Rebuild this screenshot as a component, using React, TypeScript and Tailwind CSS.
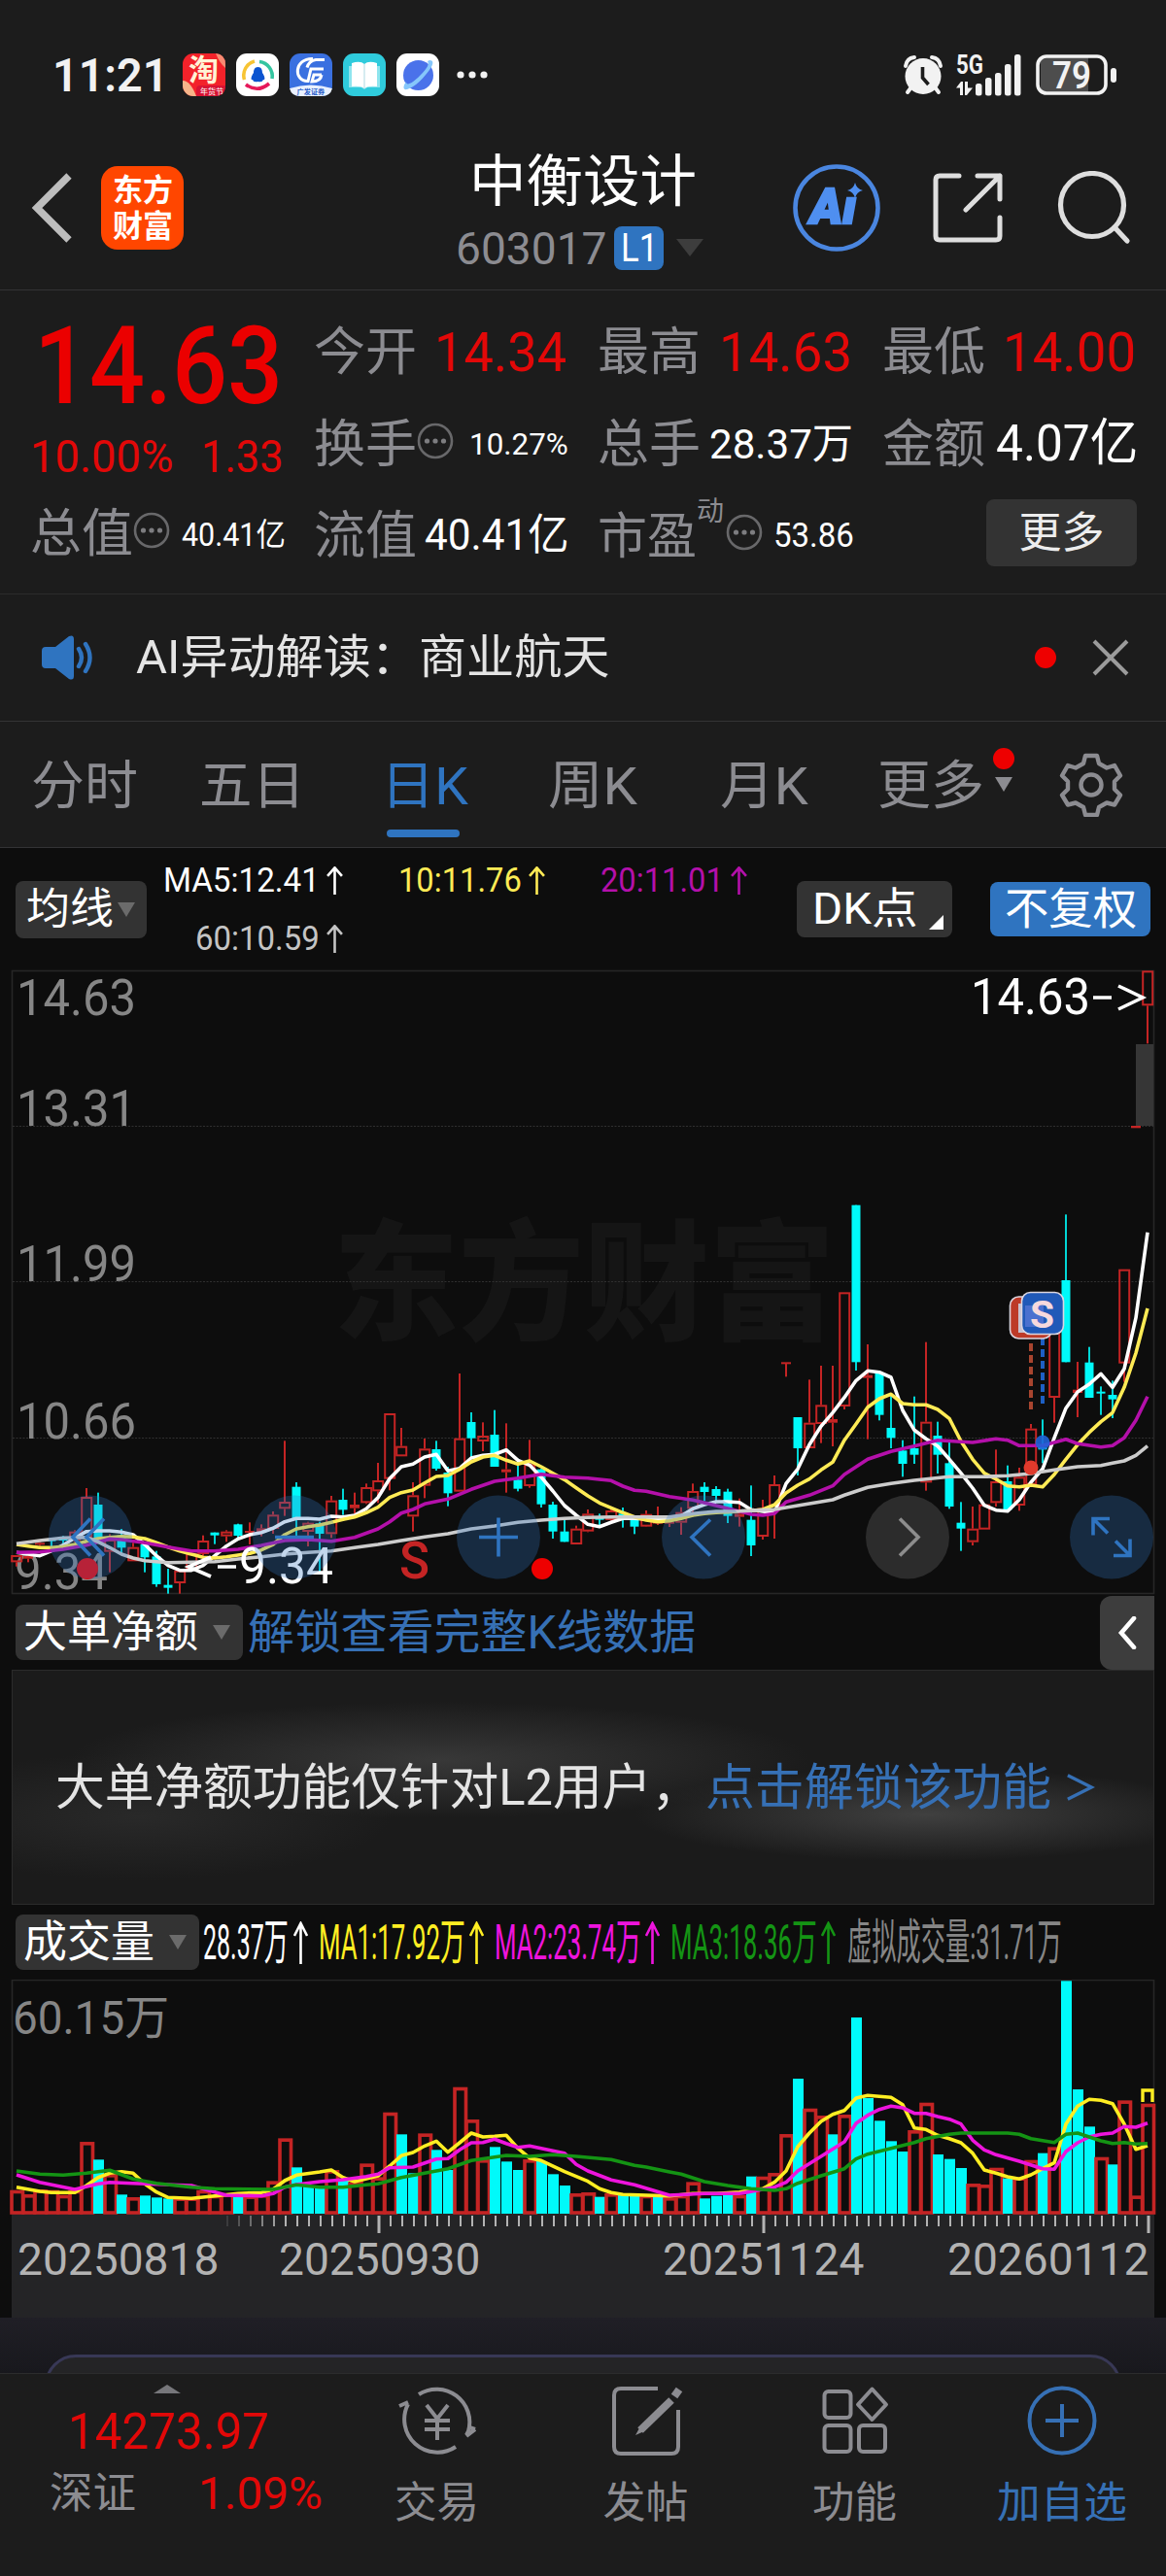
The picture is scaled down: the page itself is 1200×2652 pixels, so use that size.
import { useLayoutEffect, useRef, useState, type ReactNode } from "react";
import clsx from "clsx";

const FONT = "font-[Roboto,'Noto_Sans_CJK_SC',sans-serif]";

type Candle = ["r" | "c", number, number, number, number];
type Point = [number, number];

// [color, high, low, body top, body bottom], in thirds of a pixel below PRICE_BASE
const CANDLES: Candle[] = [
  ["r", 1203, 1238, 1203, 1225],
  ["r", 1203, 1225, 1206, 1214],
  ["r", 1162, 1175, 1165, 1171],
  ["c", 1150, 1176, 1154, 1160],
  ["c", 1144, 1172, 1152, 1157],
  ["r", 1126, 1165, 1130, 1160],
  ["r", 996, 1150, 1023, 1150],
  ["c", 1010, 1165, 1047, 1160],
  ["r", 1138, 1256, 1155, 1193],
  ["c", 1122, 1200, 1142, 1180],
  ["r", 1165, 1222, 1178, 1222],
  ["c", 1165, 1256, 1170, 1210],
  ["c", 1190, 1301, 1207, 1293],
  ["c", 1245, 1322, 1295, 1304],
  ["r", 1245, 1322, 1250, 1290],
  ["r", 1195, 1250, 1198, 1248],
  ["r", 1142, 1205, 1158, 1200],
  ["c", 1133, 1169, 1133, 1142],
  ["r", 1126, 1162, 1130, 1145],
  ["c", 1106, 1156, 1108, 1143],
  ["r", 1102, 1170, 1128, 1134],
  ["r", 1108, 1145, 1120, 1131],
  ["r", 1068, 1137, 1078, 1122],
  ["r", 850, 1082, 1038, 1060],
  ["c", 978, 1160, 992, 1090],
  ["r", 1100, 1176, 1103, 1131],
  ["c", 1100, 1260, 1105, 1137],
  ["r", 1020, 1150, 1034, 1138],
  ["c", 998, 1079, 1032, 1063],
  ["r", 1010, 1075, 1047, 1058],
  ["r", 982, 1045, 993, 1042],
  ["r", 918, 1042, 972, 1006],
  ["r", 765, 1003, 765, 968],
  ["r", 810, 898, 866, 898],
  ["r", 978, 1130, 1018, 1084],
  ["r", 843, 1027, 874, 989],
  ["c", 850, 942, 876, 936],
  ["c", 930, 1052, 948, 1012],
  ["r", 642, 1007, 842, 1007],
  ["c", 762, 900, 792, 842],
  ["r", 793, 882, 834, 852],
  ["c", 755, 930, 831, 930],
  ["r", 796, 1010, 938, 947],
  ["c", 905, 1006, 970, 998],
  ["r", 847, 995, 922, 990],
  ["c", 936, 1056, 938, 1046],
  ["c", 1038, 1152, 1047, 1130],
  ["c", 1095, 1162, 1130, 1162],
  ["r", 1112, 1170, 1121, 1170],
  ["r", 1062, 1132, 1075, 1130],
  ["c", 1075, 1110, 1088, 1093],
  ["r", 1060, 1097, 1065, 1095],
  ["c", 1056, 1118, 1075, 1083],
  ["c", 1088, 1138, 1090, 1115],
  ["r", 1065, 1116, 1076, 1115],
  ["r", 1053, 1110, 1098, 1106],
  ["r", 1085, 1116, 1100, 1106],
  ["r", 1055, 1140, 1070, 1103],
  ["r", 982, 1085, 1005, 1060],
  ["c", 978, 1036, 992, 1008],
  ["c", 990, 1040, 999, 1020],
  ["c", 998, 1104, 1007, 1082],
  ["r", 1028, 1115, 1075, 1085],
  ["c", 988, 1206, 1094, 1173],
  ["r", 1032, 1155, 1058, 1146],
  ["r", 957, 1152, 984, 1066],
  ["r", 607, 652, 607, 611],
  ["c", 777, 957, 777, 873],
  ["r", 661, 873, 794, 873],
  ["r", 618, 857, 739, 798],
  ["r", 618, 867, 783, 794],
  ["r", 391, 753, 391, 744],
  ["c", 122, 633, 122, 607],
  ["r", 552, 845, 647, 656],
  ["c", 640, 787, 640, 770],
  ["c", 710, 873, 810, 841],
  ["c", 848, 961, 880, 921],
  ["c", 713, 921, 873, 893],
  ["r", 545, 1004, 791, 979],
  ["c", 791, 951, 834, 893],
  ["c", 855, 1060, 919, 1053],
  ["c", 1039, 1190, 1103, 1121],
  ["r", 1053, 1173, 1121, 1163],
  ["r", 1046, 1124, 1046, 1124],
  ["r", 877, 1053, 975, 1042],
  ["c", 926, 1067, 975, 1063],
  ["r", 933, 1066, 961, 1050],
  ["r", 798, 986, 812, 986],
  ["c", 784, 919, 870, 877],
  ["r", 494, 794, 494, 717],
  ["c", 151, 607, 354, 607],
  ["r", 606, 777, 692, 702],
  ["c", 560, 717, 608, 717],
  ["c", 682, 770, 698, 703],
  ["c", 664, 780, 708, 722],
  ["r", 320, 668, 320, 611],
  ["r", -123, -116, -123, -116],
  ["r", -602, -377, -602, -494],
];

// One value per candle, same unit as CANDLES
const MA5 = [
  1195, 1200, 1205, 1190, 1172, 1150, 1130, 1128, 1128, 1132, 1140, 1170, 1205, 1235, 1250, 1250, 1235,
  1205, 1175, 1153, 1140, 1133, 1120, 1100, 1090, 1090, 1092, 1083, 1085, 1080, 1060, 1025, 967, 930, 922,
  900, 892, 943, 935, 903, 895, 892, 878, 910, 925, 962, 1005, 1050, 1080, 1108, 1115, 1102, 1090, 1090,
  1092, 1092, 1092, 1082, 1060, 1047, 1038, 1038, 1040, 1063, 1068, 1072, 982, 937, 862, 805, 763, 716,
  664, 634, 638, 654, 756, 817, 844, 866, 907, 950, 996, 1049, 1064, 1067, 1032, 978, 937, 841, 749, 699,
  675, 643, 685, 628, 470, 206,
];
const MA10 = [
  1170, 1175, 1180, 1180, 1177, 1170, 1160, 1152, 1148, 1145, 1147, 1152, 1165, 1178, 1190, 1200, 1210,
  1212, 1208, 1203, 1198, 1187, 1170, 1140, 1122, 1115, 1110, 1102, 1093, 1085, 1072, 1055, 1025, 1010,
  1002, 980, 960, 957, 938, 915, 900, 895, 910, 922, 912, 930, 950, 970, 995, 1020, 1042, 1057, 1072, 1085,
  1095, 1100, 1097, 1090, 1080, 1075, 1072, 1070, 1068, 1066, 1062, 1048, 1011, 987, 968, 940, 916, 848,
  798, 746, 720, 706, 735, 739, 739, 753, 781, 851, 907, 950, 968, 989, 992, 987, 992, 954, 907, 862, 824,
  791, 763, 685, 579, 441,
];
const MA20: Point[] = [
  [0, 1195], [2, 1193], [4, 1185], [6, 1172], [8, 1153], [9, 1155], [11, 1165], [13, 1178], [15, 1190],
  [17, 1190], [19, 1185], [21, 1173], [23, 1158], [25, 1155], [27, 1160], [29, 1148], [31, 1122],
  [32, 1100], [33, 1073], [34, 1062], [35, 1045], [37, 1030], [39, 1000], [41, 975], [43, 965], [45, 953],
  [47, 962], [49, 965], [51, 973], [52, 990], [53, 1003], [54, 1006], [56, 1022], [58, 1033], [60, 1050],
  [62, 1068], [63, 1077], [64, 1080], [65, 1075], [66, 1039], [68, 1018], [70, 989], [71, 954], [73, 907],
  [75, 883], [77, 866], [79, 848], [82, 855], [84, 844], [85, 848], [86, 865], [88, 865], [90, 845],
  [91, 859], [93, 869], [94, 865], [95, 841], [96, 787], [97, 713],
];
const MA60: Point[] = [
  [0, 1168], [2, 1158], [4, 1150], [6, 1148], [7, 1162], [8, 1180], [9, 1200], [10, 1212], [11, 1220],
  [13, 1226], [15, 1225], [17, 1223], [19, 1215], [21, 1208], [23, 1200], [25, 1195], [27, 1190],
  [29, 1180], [31, 1170], [33, 1158], [35, 1147], [37, 1137], [39, 1122], [41, 1113], [43, 1102],
  [45, 1095], [47, 1090], [49, 1087], [51, 1085], [56, 1085], [58, 1075], [60, 1068], [62, 1067],
  [65, 1062], [67, 1050], [70, 1032], [71, 1018], [73, 994], [75, 982], [77, 972], [80, 961], [83, 961],
  [85, 958], [87, 951], [89, 940], [91, 930], [93, 926], [94, 919], [95, 912], [96, 895], [97, 866],
];

// Positive values are down days, negative ones up days (outlined)
const VOLUMES = [
  -915, -928, -913, -915, -930, -915, -766, 820, -865, 928, -937, 931, 937, 940, -938, -938, -915, -930,
  -925, 935, -932, -928, -887, -755, 844, 900, 905, -853, 885, -890, -833, -875, -675, 742, 862, -740, 790,
  852, -597, -697, -820, 781, 826, 852, -820, 825, 865, 900, -925, -922, 935, -925, 930, 930, -930, 933,
  -937, -930, -890, 940, 932, 930, -930, 872, -873, -862, -742, 570, -663, -685, 742, -682, 381, 630, 700,
  763, 795, -730, -645, 804, 818, 846, -895, -898, -846, 878, -875, -822, 800, -782, 268, 603, 718, -813,
  835, -638, -932, -648,
];
const VOL_MA1: Point[] = [
  [0, 905], [2, 918], [3, 922], [5, 922], [6, 900], [7, 875], [8, 862], [9, 857], [10, 862], [11, 895],
  [12, 920], [13, 937], [15, 940], [17, 932], [19, 925], [21, 922], [22, 912], [23, 885], [24, 868],
  [26, 858], [27, 852], [28, 875], [29, 888], [31, 870], [32, 840], [33, 808], [34, 798], [35, 778],
  [36, 763], [37, 797], [38, 768], [39, 738], [40, 750], [41, 748], [42, 745], [43, 785], [44, 815],
  [45, 823], [47, 857], [49, 887], [50, 910], [51, 922], [52, 928], [56, 932], [58, 925], [60, 925],
  [62, 920], [64, 910], [65, 890], [66, 855], [67, 780], [68, 738], [69, 702], [70, 680], [71, 668],
  [72, 630], [73, 622], [75, 628], [76, 650], [77, 722], [78, 727], [79, 745], [80, 755], [81, 768],
  [82, 800], [83, 852], [84, 862], [85, 873], [86, 880], [87, 867], [88, 848], [89, 830], [90, 710],
  [91, 655], [92, 634], [93, 637], [94, 647], [95, 710], [96, 788], [97, 777],
];
const VOL_MA2: Point[] = [
  [0, 867], [2, 890], [5, 912], [7, 895], [8, 890], [10, 893], [15, 900], [17, 920], [18, 930], [21, 932],
  [22, 925], [23, 905], [24, 897], [26, 888], [28, 882], [30, 872], [31, 865], [32, 845], [34, 843],
  [36, 818], [37, 817], [38, 790], [39, 768], [40, 767], [41, 757], [42, 770], [43, 782], [44, 778],
  [45, 785], [47, 800], [48, 835], [49, 855], [51, 883], [53, 898], [56, 930], [59, 925], [62, 925],
  [64, 912], [65, 905], [66, 890], [67, 855], [69, 810], [71, 765], [72, 708], [73, 683], [74, 665],
  [75, 655], [76, 660], [77, 677], [78, 677], [79, 687], [80, 695], [81, 710], [82, 760], [83, 790],
  [84, 805], [86, 825], [88, 848], [89, 850], [90, 795], [91, 768], [92, 750], [93, 742], [94, 738],
  [95, 718], [96, 720], [97, 707],
];
const VOL_MA3: Point[] = [
  [0, 855], [2, 865], [4, 868], [6, 862], [8, 853], [10, 880], [12, 893], [15, 905], [17, 910], [22, 912],
  [24, 898], [26, 905], [28, 905], [30, 898], [31, 895], [33, 875], [35, 862], [37, 848], [39, 823],
  [41, 812], [42, 807], [44, 810], [46, 805], [48, 810], [51, 820], [53, 838], [54, 843], [56, 858],
  [57, 865], [59, 888], [61, 900], [63, 910], [65, 915], [66, 910], [67, 893], [69, 870], [71, 848],
  [72, 818], [73, 803], [75, 785], [77, 767], [78, 755], [80, 742], [81, 738], [85, 738], [86, 742],
  [87, 755], [89, 767], [90, 742], [91, 738], [93, 762], [94, 770], [95, 767], [96, 772], [97, 770],
];

const PRICE_BASE = 201;

const cx = (i: number) => 17 + i * 12;
const priceY = (v: number) => PRICE_BASE + v / 3;
const volumeY = (v: number) => (v - 267) / 3 + 1;

const linePoints = (points: Point[], y: (v: number) => number) =>
  points.map(([i, v]) => `${cx(i)},${y(v).toFixed(1)}`).join(" ");

const indexed = (values: number[]): Point[] => values.map((v, i) => [i, v]);

/** One line of text, stretched or squeezed to the width of its box. */
function Fit({ children, className }: { children: ReactNode; className?: string }) {
  const box = useRef<HTMLSpanElement>(null);
  const text = useRef<HTMLSpanElement>(null);
  const [scale, setScale] = useState(1);

  useLayoutEffect(() => {
    if (box.current && text.current) {
      setScale(box.current.clientWidth / text.current.offsetWidth);
    }
  }, [children]);

  return (
    <span ref={box} className={clsx("block shrink-0 leading-none", className)}>
      <span
        ref={text}
        className="inline-block origin-left whitespace-nowrap"
        style={{ transform: `scaleX(${scale})` }}
      >
        {children}
      </span>
    </span>
  );
}

function Up({ className }: { className?: string }) {
  return (
    <svg
      viewBox="0 0 16 44"
      preserveAspectRatio="none"
      fill="none"
      stroke="currentColor"
      strokeWidth="2.6"
      className={clsx("shrink-0", className)}
    >
      <path d="M8 44V3M1 15 8 2l7 13" vectorEffect="non-scaling-stroke" />
    </svg>
  );
}

function Caret({ className }: { className?: string }) {
  return (
    <svg viewBox="0 0 18 15" className={clsx("h-[15px] w-[18px] shrink-0", className)}>
      <path d="M0 0h18L9 15z" />
    </svg>
  );
}

function More() {
  return (
    <svg viewBox="0 0 38 38" className="mb-[8px] size-[38px] shrink-0">
      <circle cx="19" cy="19" r="17" fill="none" stroke="#68686a" strokeWidth="2.6" />
      <g fill="#7d7d80">
        <circle cx="10.5" cy="19" r="2.6" />
        <circle cx="19" cy="19" r="2.6" />
        <circle cx="27.5" cy="19" r="2.6" />
      </g>
    </svg>
  );
}

function StatusBar() {
  return (
    <div className="flex h-[154px] items-center pl-[54px] text-[#f2f2f2]">
      <Fit className="w-[119px] text-[49px] font-semibold">11:21</Fit>
      <div className="ml-[15px] flex gap-[11px]">
        <svg viewBox="0 0 44 44" className="size-[44px] overflow-visible">
          <rect width="44" height="44" rx="11" fill="#f3222a" />
          <path d="M0 28q8 0 14 16H11A11 11 0 0 1 0 33z" fill="#f7b58a" />
          <path d="M34 0q10 1 10 11v4q-6-5-10-15z" fill="#f98a72" />
          <text x="6" y="28" fontSize="31" fontWeight="700" fill="#fff3d6" className={FONT}>淘</text>
          <path d="M18 33h26q0 11-11 11H14v-7q0-4 4-4z" fill="#d81433" />
          <text x="18" y="42" fontSize="8" fill="#fff" className={FONT}>年货节</text>
        </svg>
        <svg viewBox="0 0 44 44" className="size-[44px]" fill="none" strokeWidth="3.6">
          <rect width="44" height="44" rx="11" fill="#fff" />
          <path d="M8.500 27A15 15 0 0 1 19 8" stroke="#f7c433" />
          <path d="M24 8.500A15 15 0 0 1 37 26" stroke="#34c5a0" />
          <path d="M10 32q12 9 24-1" stroke="#e6195a" />
          <path d="M22.500 14c3.500 0 4.500 3 4.500 6 3 4 3 8 1 7q-1 3-5.500 2-5 1-5.500-2c-2 1-2-3 1-7 0-3 1-6 4.500-6z" fill="#0b54d0" />
        </svg>
        <svg viewBox="0 0 44 44" className="size-[44px] overflow-visible">
          <rect width="44" height="44" rx="11" fill="#3a70e0" />
          <path d="M0 36q22-7 44 0-2 8-11 8H11Q2 44 0 36z" fill="#eaf1ff" />
          <g fill="none" stroke="#fff" strokeWidth="3">
            <path d="M24 5.500C4 5 4 29 19 28.500L22 16h13M36 6.500H27q-7 1-9 8M33 22h-8l-2 7q9 0 10-7" />
          </g>
          <text x="7.500" y="42" fontSize="7.200" fontWeight="700" fill="#2a5fc9" className={FONT}>广发证券</text>
        </svg>
        <svg viewBox="0 0 44 44" className="size-[44px]">
          <rect width="44" height="44" rx="11" fill="#2fcbdc" />
          <path d="M6 13h32v22H25l-3 2-3-2H6z" fill="#8fe5ee" />
          <path d="M9 10q9-3 13 1 4-4 13-1v24q-9-1-13 2-4-3-13-2z" fill="#fff" />
          <path d="M22 11v25" stroke="#c9e6ec" strokeWidth="1.500" />
        </svg>
        <svg viewBox="0 0 44 44" className="size-[44px]">
          <rect width="44" height="44" rx="11" fill="#fff" />
          <circle cx="22.500" cy="22.500" r="15.500" fill="#4a72ea" />
          <path d="M34 7c4 0 5 3 0 10S19 35 11 37c-5 1-4-4-1-8 0 5 6 2 14-6S34 11 32 8z" fill="#86c7fb" />
        </svg>
      </div>
      <svg viewBox="0 0 32 8" className="ml-[18px] h-[8px] w-[32px] fill-[#f2f2f2]">
        <circle cx="4" cy="4" r="3.600" />
        <circle cx="16" cy="4" r="3.600" />
        <circle cx="28" cy="4" r="3.600" />
      </svg>

      <svg viewBox="0 0 42 42" className="ml-auto size-[42px]">
        <g fill="none" stroke="#f2f2f2" strokeWidth="4" strokeLinecap="round">
          <path d="M3 12q1-8 9-9M39 12q-1-8-9-9M8 35l-3 4M34 35l3 4" />
        </g>
        <circle cx="21" cy="22.500" r="18.500" fill="#f2f2f2" />
        <path d="M20.500 13v11l6 7" fill="none" stroke="#1c1c1c" strokeWidth="3.600" />
      </svg>
      <svg viewBox="0 0 68 44" className="ml-[13px] h-[44px] w-[68px] overflow-visible fill-[#f2f2f2]">
        <text x="0" y="21" fontSize="27" fontWeight="700" textLength="28" lengthAdjust="spacingAndGlyphs" className={FONT}>5G</text>
        <path d="M0 35.500 5 29h2v14H4v-7.500zM17 35.500 11 43H9V29h3v6.500z" />
        <rect x="20" y="31" width="6.500" height="12.500" rx="2.500" />
        <rect x="30" y="25" width="6.500" height="18.500" rx="2.500" />
        <rect x="40" y="20" width="6.500" height="23.500" rx="2.500" />
        <rect x="50" y="11" width="6.500" height="32.500" rx="2.500" />
        <rect x="60" y="1" width="6.500" height="42.500" rx="2.500" />
      </svg>
      <svg viewBox="0 0 84 42" className="mr-[50px] ml-[14px] h-[42px] w-[84px] overflow-visible fill-[#f2f2f2]">
        <rect x="5" y="3" width="49" height="36" fill="#4d4d4d" />
        <rect x="2" y="2" width="70" height="38" rx="9" fill="none" stroke="#f2f2f2" strokeWidth="3.600" />
        <rect x="77" y="14" width="6" height="15" rx="3" />
        <text x="17" y="35" fontSize="38" fontWeight="600" textLength="40" lengthAdjust="spacingAndGlyphs" className={FONT}>79</text>
      </svg>
    </div>
  );
}

function Header() {
  return (
    <div className="flex h-[145px] items-center border-b border-[#333335]">
      <svg viewBox="0 0 44 72" className="mt-[-24px] ml-[32px] h-[72px] w-[44px] shrink-0" fill="none" stroke="#bdbdbd" strokeWidth="7.500">
        <path d="M39 3 6 36l33 33" />
      </svg>
      <div className="mt-[-24px] ml-[28px] flex h-[86px] w-[85px] shrink-0 flex-col items-center justify-center gap-[5px] rounded-[17px] bg-[#ff4600] text-[32px] font-bold text-white">
        <Fit className="h-[32px] w-[62px]">东方</Fit>
        <Fit className="h-[32px] w-[62px]">财富</Fit>
      </div>
      <div className="ml-[280px] flex w-[257px] shrink-0 flex-col">
        <Fit className="ml-[14px] w-[234px] text-[58px] text-white">中衡设计</Fit>
        <div className="mt-[16px] mb-[16px] flex items-center">
          <Fit className="w-[156px] text-[47px] text-[#8c8c91]">603017</Fit>
          <div className="ml-[7px] flex h-[45px] w-[51px] items-center justify-center rounded-[8px] bg-[#2f74c0] text-white">
            <Fit className="w-[38px] text-[41px]">L1</Fit>
          </div>
          <svg viewBox="0 0 28 18" className="ml-[13px] h-[18px] w-[28px] fill-[#3d3d3d]">
            <path d="M0 0h28L14 18z" />
          </svg>
        </div>
      </div>
      <svg viewBox="0 0 90 90" className="mt-[-24px] ml-[90px] size-[90px] shrink-0">
        <circle cx="45" cy="45" r="42.500" fill="none" stroke="#4a86e0" strokeWidth="4.600" />
        <g fill="#4f8ff0" stroke="#4f8ff0">
          <text x="18" y="61" fontSize="50" fontWeight="900" fontStyle="italic" textLength="47" lengthAdjust="spacingAndGlyphs" strokeWidth="2.500" className={FONT}>Aı</text>
          <path stroke="none" d="M64 19q1.500 6.500 8 8-6.500 1.500-8 8-1.500-6.500-8-8 6.500-1.500 8-8z" />
        </g>
      </svg>
      <svg viewBox="0 0 72 72" className="mt-[-24px] ml-[54px] size-[72px] shrink-0" fill="none" stroke="#dedede" strokeWidth="5" strokeLinecap="round" strokeLinejoin="round">
        <path d="M27 3H7q-4 0-4 4v58q0 4 4 4h58q4 0 4-4V46M46 3h23v24M69 3 34 38" />
      </svg>
      <svg viewBox="0 0 76 76" className="mt-[-24px] ml-[56px] size-[76px] shrink-0" fill="none" stroke="#dedede" strokeWidth="5.200" strokeLinecap="round">
        <circle cx="36" cy="35" r="32.500" />
        <path d="m59 58 13 14" />
      </svg>
    </div>
  );
}

function Label({ children }: { children: ReactNode }) {
  return <Fit className="w-[106px] text-[53px] text-[#8c8c91]">{children}</Fit>;
}

function QuotePanel() {
  return (
    <div className="flex h-[313px] border-b border-[#2b2b2c] pt-[17px] text-white">
      <div className="flex w-[323px] shrink-0 flex-col pl-[31px]">
        <Fit className="mt-[6px] ml-[4px] w-[256px] text-[111px] font-medium text-[#eb0000]">14.63</Fit>
        <div className="mt-[3px] flex h-[66px] items-center text-[47px] text-[#e20808]">
          <Fit className="w-[147px]">10.00%</Fit>
          <Fit className="ml-[29px] w-[85px]">1.33</Fit>
        </div>
        <div className="flex h-[96px] items-center">
          <Label>总值</Label>
          <More />
          <Fit className="ml-[12px] w-[107px] text-[33px]">40.41亿</Fit>
        </div>
      </div>
      <div className="flex w-[292px] shrink-0 flex-col">
        <div className="flex h-[95px] items-center">
          <Label>今开</Label>
          <Fit className="ml-[18px] w-[136px] text-[55px] text-[#e20808]">14.34</Fit>
        </div>
        <div className="flex h-[94px] items-center">
          <Label>换手</Label>
          <More />
          <Fit className="mb-[2px] ml-[16px] w-[102px] text-[32px]">10.27%</Fit>
        </div>
        <div className="flex h-[94px] items-center">
          <Label>流值</Label>
          <Fit className="mb-[2px] ml-[8px] w-[149px] text-[44px]">40.41亿</Fit>
        </div>
      </div>
      <div className="flex w-[293px] shrink-0 flex-col">
        <div className="flex h-[95px] items-center">
          <Label>最高</Label>
          <Fit className="ml-[19px] w-[137px] text-[55px] text-[#e20808]">14.63</Fit>
        </div>
        <div className="flex h-[94px] items-center">
          <Label>总手</Label>
          <Fit className="mb-[2px] ml-[9px] w-[148px] text-[43px]">28.37万</Fit>
        </div>
        <div className="flex h-[94px] items-center">
          <Fit className="w-[102px] text-[51px] text-[#8c8c91]">市盈</Fit>
          <Fit className="mr-[2px] mb-[50px] w-[28px] text-[28px] text-[#8c8c91]">动</Fit>
          <More />
          <Fit className="mb-[2px] ml-[11px] w-[83px] text-[35px]">53.86</Fit>
        </div>
      </div>
      <div className="flex flex-1 flex-col">
        <div className="flex h-[95px] items-center">
          <Label>最低</Label>
          <Fit className="ml-[18px] w-[137px] text-[55px] text-[#e20808]">14.00</Fit>
        </div>
        <div className="flex h-[94px] items-center">
          <Label>金额</Label>
          <Fit className="mb-[2px] ml-[11px] w-[146px] text-[52px]">4.07亿</Fit>
        </div>
        <div className="flex h-[94px] items-center">
          <div className="mb-[7px] ml-[107px] flex h-[69px] w-[155px] items-center justify-center rounded-[8px] bg-[#333333]">
            <Fit className="w-[88px] text-[44px] text-[#ededed]">更多</Fit>
          </div>
        </div>
      </div>
    </div>
  );
}

function Notice() {
  return (
    <div className="flex h-[131px] items-center border-b border-[#333335]">
      <svg viewBox="0 0 56 46" className="ml-[43px] h-[46px] w-[56px]">
        <path d="M4 12h10L28 1q5-2 5 3v38q0 5-5 3L14 34H4q-4 0-4-4V16q0-4 4-4z" fill="#2f74c0" />
        <path d="M38 14q6 9 0 18M45 9q9 14 0 28" fill="none" stroke="#2f74c0" strokeWidth="4.400" strokeLinecap="round" />
      </svg>
      <Fit className="ml-[41px] w-[487px] text-[48px] text-[#e4e4e4]">AI异动解读：商业航天</Fit>
      <i className="ml-auto size-[22px] rounded-full bg-[#ee0000]" />
      <svg viewBox="0 0 40 40" className="mr-[37px] ml-[36px] size-[40px]" stroke="#9b9b9b" strokeWidth="4">
        <path d="m3 3 34 34M37 3 3 37" />
      </svg>
    </div>
  );
}

function Tabs() {
  return (
    <div className="flex h-[130px] items-center border-b border-[#333335] pt-[5px] text-[54px] text-[#8c8c91]">
      <Fit className="ml-[32px] w-[110px]">分时</Fit>
      <Fit className="ml-[63px] w-[109px]">五日</Fit>
      <div className="relative ml-[78px] text-[#2f74c0]">
        <Fit className="w-[90px]">日K</Fit>
        <i className="absolute top-[71px] left-[6px] h-[8px] w-[75px] rounded-full bg-[#2f74c0]" />
      </div>
      <Fit className="ml-[82px] w-[92px]">周K</Fit>
      <Fit className="ml-[85px] w-[91px]">月K</Fit>
      <Fit className="ml-[71px] w-[110px]">更多</Fit>
      <div className="mb-[35px] ml-[9px] flex flex-col items-center gap-[8px]">
        <i className="size-[22px] rounded-full bg-[#ee0000]" />
        <Caret className="fill-[#8c8c91]" />
      </div>
      <svg viewBox="0 0 66 66" className="mb-[5px] ml-[46px] size-[66px]" fill="none" stroke="#8c8c91" strokeWidth="4.400" strokeLinejoin="round">
        <path d="M27 3h12l2 8 8 4.500 8-2.500 6 10.500-6 6v8l6 6-6 10-8-2-8 4.500-2 8H27l-2-8-8-4.500-8 2-6-10 6-6v-8l-6-6L9 13l8 2.500 8-4.500z" />
        <circle cx="33" cy="33" r="10.500" />
      </svg>
    </div>
  );
}

function MaRow() {
  return (
    <div className="flex h-[126px] items-center text-[35px]">
      <div className="ml-[16px] flex h-[59px] w-[135px] items-center rounded-[8px] bg-[#333333] pl-[11px] text-white">
        <Fit className="w-[90px] text-[44px]">均线</Fit>
        <Caret className="ml-[4px] fill-[#6b6b6b]" />
      </div>
      <div className="ml-[17px] flex w-[652px] flex-col gap-[25px]">
        <div className="flex items-center">
          <Fit className="w-[161px] text-white">MA5:12.41</Fit>
          <Up className="ml-[7px] h-[29px] w-[17px] text-white" />
          <Fit className="ml-[57px] w-[127px] text-[#ffeb55]">10:11.76</Fit>
          <Up className="ml-[7px] h-[29px] w-[17px] text-[#ffeb55]" />
          <Fit className="ml-[57px] w-[127px] text-[#b410aa]">20:11.01</Fit>
          <Up className="ml-[7px] h-[29px] w-[17px] text-[#b410aa]" />
        </div>
        <div className="flex items-center text-[#c4c4c4]">
          <Fit className="ml-[33px] w-[128px]">60:10.59</Fit>
          <Up className="ml-[7px] h-[29px] w-[17px]" />
        </div>
      </div>
      <div className="flex h-[58px] w-[160px] items-center rounded-[8px] bg-[#333333] pl-[16px] text-white">
        <Fit className="w-[108px] text-[44px]">DK点</Fit>
        <svg viewBox="0 0 15 15" className="mt-[26px] ml-[12px] size-[15px] fill-white">
          <path d="M15 0v15H0z" />
        </svg>
      </div>
      <div className="ml-[39px] flex h-[56px] w-[165px] items-center justify-center rounded-[8px] bg-[#2f74c0] text-white">
        <Fit className="w-[136px] text-[45px]">不复权</Fit>
      </div>
    </div>
  );
}

function CandleShape({ candle, x }: { candle: Candle; x: number }) {
  const [color, high, low, top, bottom] = candle;
  const yTop = priceY(top);
  const yBottom = priceY(bottom);
  if (color === "c") {
    return (
      <g fill="#00fafa">
        <rect x={x - 1} y={priceY(high)} width="2" height={(low - high) / 3} opacity="0.85" />
        <rect x={x - 4.5} y={yTop} width="9" height={Math.max(2, yBottom - yTop)} />
      </g>
    );
  }
  const hollow = yBottom - yTop > 4.2;
  return (
    <g fill="#c42424">
      <rect x={x - 1} y={priceY(high)} width="2" height={Math.max(0, yTop - priceY(high))} />
      <rect x={x - 1} y={yBottom} width="2" height={Math.max(0, priceY(low) - yBottom)} />
      {hollow ? (
        <rect x={x - 4.8} y={yTop + 1} width="10" height={yBottom - yTop - 2} fill="none" stroke="#c42424" strokeWidth="2" />
      ) : (
        <rect x={x - 5} y={yTop} width="10" height={Math.max(2, yBottom - yTop)} />
      )}
    </g>
  );
}

function RoundButton({ x, muted, children }: { x: number; muted?: boolean; children: ReactNode }) {
  return (
    <g>
      <circle cx={x} cy="583.500" r="43" fill={muted ? "#2c2c2c" : "#2f74c0"} fillOpacity={muted ? 1 : 0.29} />
      <g transform={`translate(${x} 583.5)`} fill="none" stroke={muted ? "#8d8d8d" : "#2f74c0"} strokeWidth="3.600">
        {children}
      </g>
    </g>
  );
}

function AxisText({ x, y, width, children, fill = "#868686" }: { x: number; y: number; width: number; children: string; fill?: string }) {
  return (
    <text x={x} y={y} fontSize="51" fill={fill} textLength={width} lengthAdjust="spacingAndGlyphs">
      {children}
    </text>
  );
}

function PriceChart() {
  return (
    <svg viewBox="0 0 1200 643" className={clsx("block h-[643px] w-full overflow-visible", FONT)}>
      <text x="343" y="370" fontSize="134" fontWeight="900" fill="#151515" textLength="516" lengthAdjust="spacingAndGlyphs">
        东方财富
      </text>
      <rect x="12.500" y="0.500" width="1175" height="641" fill="none" stroke="#262626" strokeWidth="1.600" />
      {[160.5, 320.5, 481.5].map((y) => (
        <path key={y} d={`M13 ${y}H1187`} stroke="#303030" strokeDasharray="2 1.500" />
      ))}
      <AxisText x={17} y={46} width={123}>14.63</AxisText>
      <AxisText x={17} y={160} width={123}>13.31</AxisText>
      <AxisText x={17} y={320} width={123}>11.99</AxisText>
      <AxisText x={17} y={482} width={123}>10.66</AxisText>
      <AxisText x={15} y={637} width={96}>9.34</AxisText>

      <rect x="1169" y="76" width="18" height="84" fill="#363636" />
      {CANDLES.map((candle, i) => (
        <CandleShape key={i} candle={candle} x={cx(i)} />
      ))}

      <g fill="none" strokeWidth="3.600" strokeLinejoin="round">
        <polyline points={linePoints(indexed(MA5), priceY)} stroke="#ffffff" />
        <polyline points={linePoints(indexed(MA10), priceY)} stroke="#ffeb55" />
        <polyline points={linePoints(MA20, priceY)} stroke="#b410aa" />
        <polyline points={linePoints(MA60, priceY)} stroke="#cccccc" />
      </g>

      <g fill="none" stroke="#ffffff" strokeWidth="3.600">
        <path d="M217 604 194 614l23 10M224 614h19" />
        <path d="M1125 28h19M1151 16l25 12-25 12" />
      </g>
      <AxisText x={246} y={631} width={97} fill="#ffffff">9.34</AxisText>
      <AxisText x={999} y={45} width={123} fill="#ffffff">14.63</AxisText>
      <text x="411" y="626" fontSize="53" fontWeight="500" fill="#c42424" textLength="31" lengthAdjust="spacingAndGlyphs">S</text>

      {/* buy / sell markers */}
      <path d="M1061 384v69" stroke="#a8452f" strokeWidth="4" strokeDasharray="8 4" />
      <path d="M1073 378v70" stroke="#1d5fc4" strokeWidth="4" strokeDasharray="8 4" />
      <circle cx="1061" cy="512" r="7.500" fill="#e03a2c" />
      <circle cx="1073" cy="486" r="7.500" fill="#1f63d8" fillOpacity="0.900" />
      <rect x="1039.500" y="336" width="43" height="43" rx="9" fill="#bd3a28" stroke="#dcd6e0" strokeWidth="1.600" />
      <rect x="1048" y="343" width="20" height="30" fill="#c9c2cf" />
      <rect x="1051.500" y="331.500" width="43" height="43" rx="9" fill="#2059b8" stroke="#dcd6e0" strokeWidth="1.600" />
      <rect x="1055" y="345" width="19" height="22" fill="#4a70cf" />
      <text x="1060" y="368" fontSize="39" fontWeight="700" fill="#f6d9dd" textLength="25" lengthAdjust="spacingAndGlyphs">S</text>

      <circle cx="90" cy="616" r="11" fill="#ee0000" />
      <circle cx="558" cy="616" r="11" fill="#ee0000" />
      <RoundButton x={93}>
        <path d="M0-19-18 0 0 19M14-19-4 0l18 19" />
      </RoundButton>
      <RoundButton x={303}>
        <path d="M-20 0h40" />
      </RoundButton>
      <RoundButton x={513}>
        <path d="M-20 0h40M0-20v40" />
      </RoundButton>
      <RoundButton x={724}>
        <path d="M7-18-12 0 7 19" />
      </RoundButton>
      <RoundButton x={934} muted>
        <path d="M-8-19 11 0-8 19" />
      </RoundButton>
      <RoundButton x={1144}>
        <path d="M-2-19h-17v17M-19-19-4-4M19 2v17H2M4 4l15 15" />
      </RoundButton>
    </svg>
  );
}

function FlowRow() {
  return (
    <div className="flex h-[77px] items-center">
      <div className="ml-[16px] flex h-[57px] w-[234px] items-center rounded-[8px] bg-[#333333] pl-[8px]">
        <Fit className="w-[180px] text-[45px] text-white">大单净额</Fit>
        <Caret className="ml-[15px] fill-[#6b6b6b]" />
      </div>
      <Fit className="ml-[5px] w-[461px] text-[48px] text-[#3670b5]">解锁查看完整K线数据</Fit>
      <div className="mr-[12px] ml-auto flex h-[76px] w-[56px] items-center justify-center rounded-l-[12px] bg-[#3d3d3d]">
        <svg viewBox="0 0 20 34" className="h-[34px] w-[20px]" fill="none" stroke="#ffffff" strokeWidth="4.600" strokeLinecap="round">
          <path d="M17 2 4 17l13 15" />
        </svg>
      </div>
    </div>
  );
}

function UnlockPanel() {
  return (
    <div className="mx-[12px] flex h-[242px] items-center border border-[#2b2b2b] bg-[#1b1b1b] bg-[radial-gradient(ellipse_380px_60px_at_440px_92px,#383838,transparent),radial-gradient(ellipse_300px_48px_at_940px_148px,#404040,transparent),radial-gradient(ellipse_260px_65px_at_130px_150px,#292929,transparent)] pl-[44px] text-[51px]">
      <Fit className="w-[664px] text-[#e4e4e4]">大单净额功能仅针对L2用户，</Fit>
      <Fit className="ml-[5px] w-[356px] text-[#3670b5]">点击解锁该功能</Fit>
      <svg viewBox="0 0 30 32" className="ml-[15px] h-[30px] w-[30px]" fill="none" stroke="#3670b5" strokeWidth="3.600">
        <path d="M1 3l26 13L1 29" />
      </svg>
    </div>
  );
}

function VolumeRow() {
  return (
    <div className="flex h-[77px] items-center text-[50px]">
      <div className="ml-[16px] flex h-[57px] w-[189px] items-center rounded-[8px] bg-[#333333] pl-[8px]">
        <Fit className="w-[135px] text-[45px] text-white">成交量</Fit>
        <Caret className="ml-[15px] fill-[#6b6b6b]" />
      </div>
      <div className="ml-[4px] flex items-center text-white">
        <Fit className="w-[88px]">28.37万</Fit>
        <Up className="ml-[5px] h-[44px] w-[15px]" />
      </div>
      <div className="ml-[11px] flex items-center text-[#ffee22]">
        <Fit className="w-[151px]">MA1:17.92万</Fit>
        <Up className="ml-[4px] h-[44px] w-[15px]" />
      </div>
      <div className="ml-[11px] flex items-center text-[#ee14dd]">
        <Fit className="w-[151px]">MA2:23.74万</Fit>
        <Up className="ml-[4px] h-[44px] w-[15px]" />
      </div>
      <div className="ml-[11px] flex items-center text-[#149414]">
        <Fit className="w-[151px]">MA3:18.36万</Fit>
        <Up className="ml-[4px] h-[44px] w-[15px]" />
      </div>
      <Fit className="ml-[12px] w-[221px] text-[#868686]">虚拟成交量:31.71万</Fit>
    </div>
  );
}

function VolumeChart() {
  return (
    <svg viewBox="0 0 1200 242" className={clsx("block h-[242px] w-full", FONT)}>
      <rect x="12.500" y="0.500" width="1175" height="241" fill="none" stroke="#262626" strokeWidth="1.600" />
      <text x="13" y="56" fontSize="48" fill="#868686" textLength="161" lengthAdjust="spacingAndGlyphs">60.15万</text>
      {VOLUMES.map((v, i) => {
        const y = volumeY(Math.abs(v));
        return v > 0 ? (
          <rect key={i} x={cx(i) - 5} y={y} width="11" height={241 - y} fill="#00fafa" />
        ) : (
          <rect key={i} x={cx(i) - 5} y={y + 1.5} width="11.500" height={238.5 - y} fill="none" stroke="#c42424" strokeWidth="3.600" />
        );
      })}
      <path d="M1176 126V114h10v12" fill="none" stroke="#ffee22" strokeWidth="3.400" />
      <g fill="none" strokeWidth="3.600" strokeLinejoin="round">
        <polyline points={linePoints(VOL_MA1, volumeY)} stroke="#ffee22" />
        <polyline points={linePoints(VOL_MA2, volumeY)} stroke="#ee14dd" />
        <polyline points={linePoints(VOL_MA3, volumeY)} stroke="#149414" />
      </g>
    </svg>
  );
}

function DateAxis() {
  return (
    <div className="mx-[12px] h-[106px] bg-[#242426]">
      <svg viewBox="12 0 1176 22" className="block h-[22px] w-full">
        {Array.from({ length: 80 }, (_, k) => {
          const i = k + 18;
          const major = i === 31 || i === 64 || i === 97;
          return (
            <rect
              key={i}
              x={cx(i) - (major ? 0.5 : 0)}
              y="1"
              width={major ? 3 : 2}
              height={major ? 18 : 11}
              fill="#b3b3b3"
              opacity={Math.min(1, (k + 1) / 6)}
            />
          );
        })}
      </svg>
      <div className="flex text-[47px] text-[#b3b3b3]">
        <Fit className="ml-[6px] w-[207px]">20250818</Fit>
        <Fit className="ml-[62px] w-[207px]">20250930</Fit>
        <Fit className="ml-[188px] w-[207px]">20251124</Fit>
        <Fit className="ml-[86px] w-[207px]">20260112</Fit>
      </div>
    </div>
  );
}

function CardPeek() {
  return (
    <div className="h-[57px] overflow-hidden bg-linear-to-b from-[#201f26] to-[#18181d] px-[46px] pt-[38px]">
      <div className="h-[80px] rounded-[32px] border-[3px] border-[#383856] bg-[#242426]" />
    </div>
  );
}

function NavItem({ label, className, icon }: { label: string; className: string; icon: ReactNode }) {
  return (
    <div className="flex w-[215px] shrink-0 flex-col items-center pt-[9px]">
      <svg viewBox="0 0 80 80" className="size-[80px]" fill="none" stroke="currentColor" strokeWidth="4">
        {icon}
      </svg>
      <Fit className={clsx("mt-[22px] text-[44px]", className)}>{label}</Fit>
    </div>
  );
}

function BottomNav() {
  return (
    <div className="flex h-[209px] border-t border-[#2b2b2c] bg-[#1c1c1c] text-[#8c8c91]">
      <div className="flex w-[342px] shrink-0 flex-col">
        <svg viewBox="0 0 28 9" className="mt-[11px] ml-[158px] h-[9px] w-[28px] fill-[#77777b]">
          <path d="M0 9h28L14 0z" />
        </svg>
        <Fit className="mt-[14px] ml-[70px] w-[207px] text-[51px] text-[#e20808]">14273.97</Fit>
        <div className="mt-[14px] flex items-center">
          <Fit className="ml-[51px] w-[89px] text-[44px]">深证</Fit>
          <Fit className="ml-[64px] w-[128px] text-[47px] text-[#e20808]">1.09%</Fit>
        </div>
      </div>
      <NavItem
        label="交易"
        className="w-[87px]"
        icon={
          <>
            <path d="M21 12A34 34 0 0 1 72 50l-2 4M73 46l6 2M59 66A34 34 0 0 1 10 22M10 20l-9 4M70 55l9-7" />
            <path d="M29 23l11 14 11-14M27 39h26M27 48h26M40 37v22" />
          </>
        }
      />
      <NavItem
        label="发帖"
        className="w-[88px]"
        icon={
          <>
            <path d="M52 6H14q-7 0-7 7v53q0 7 7 7h52q7 0 7-7V28" />
            <path d="M66 18 34 49" strokeWidth="8" />
            <path d="m34 45-5 9 9-4z" fill="currentColor" stroke="none" />
            <path d="m69 14 5-7" strokeWidth="8" />
          </>
        }
      />
      <NavItem
        label="功能"
        className="w-[87px]"
        icon={
          <>
            <rect x="8.500" y="9" width="27" height="27" rx="4" />
            <rect x="8.500" y="44" width="27" height="27" rx="4" />
            <rect x="44" y="44" width="27" height="27" rx="4" />
            <path d="M57.500 6.500 72 22.500 57.500 38 43 22.500z" strokeLinejoin="round" />
          </>
        }
      />
      <div className="-ml-[2px] text-[#3670b5]">
        <NavItem
          label="加自选"
          className="w-[134px]"
          icon={
            <>
              <circle cx="40" cy="39" r="33.500" />
              <path d="M23 39h34M40 22v34" />
            </>
          }
        />
      </div>
    </div>
  );
}

export default function App() {
  return (
    <div className={clsx("flex h-[2652px] w-[1200px] flex-col overflow-hidden bg-[#1c1c1c]", FONT)}>
      <StatusBar />
      <Header />
      <QuotePanel />
      <Notice />
      <Tabs />
      <div className="bg-[#0d0d0d]">
        <MaRow />
        <PriceChart />
        <FlowRow />
        <UnlockPanel />
        <VolumeRow />
        <VolumeChart />
        <DateAxis />
      </div>
      <CardPeek />
      <BottomNav />
    </div>
  );
}
